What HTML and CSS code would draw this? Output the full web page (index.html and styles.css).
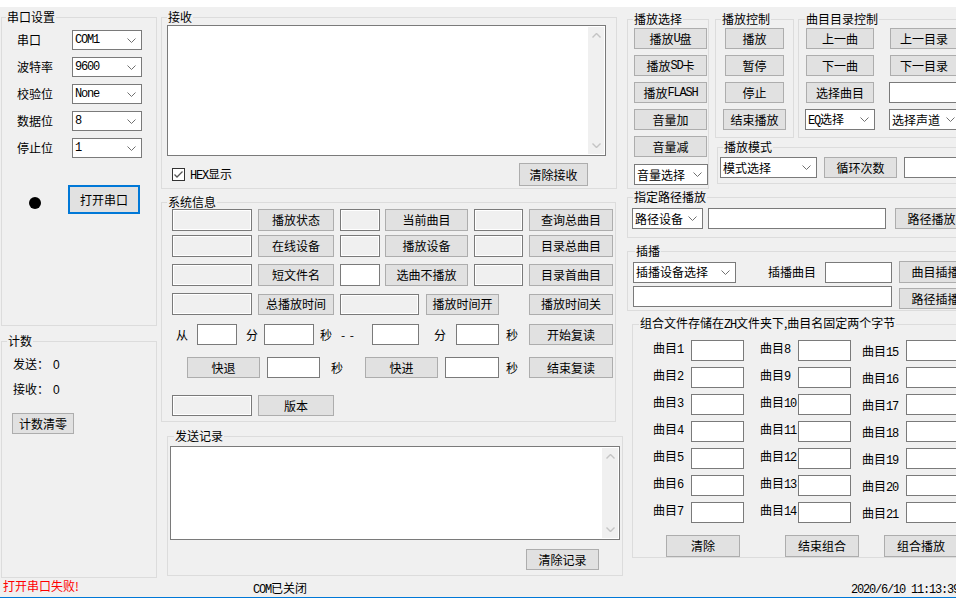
FILE: index.html
```html
<!DOCTYPE html>
<html lang="zh-CN">
<head>
<meta charset="utf-8">
<title>串口调试</title>
<link rel="stylesheet" href="styles.css">
</head>
<body>
<div class="topstrip"></div>
<div class="main">
  <div class="col-left">
    <fieldset class="grp g-serial">
      <legend>串口设置</legend>
      <div class="serial-rows">
        <div class="srow"><span class="slabel">串口</span><div class="combo w70 h20"><span class="mono">COM1</span><svg class="chev" width="9" height="5" viewBox="0 0 9 5"><polyline points="0.5,0.5 4.5,4.5 8.5,0.5"/></svg></div></div>
        <div class="srow"><span class="slabel">波特率</span><div class="combo w70 h20"><span class="mono">9600</span><svg class="chev" width="9" height="5" viewBox="0 0 9 5"><polyline points="0.5,0.5 4.5,4.5 8.5,0.5"/></svg></div></div>
        <div class="srow"><span class="slabel">校验位</span><div class="combo w70 h20"><span class="mono">None</span><svg class="chev" width="9" height="5" viewBox="0 0 9 5"><polyline points="0.5,0.5 4.5,4.5 8.5,0.5"/></svg></div></div>
        <div class="srow"><span class="slabel">数据位</span><div class="combo w70 h20"><span class="mono">8</span><svg class="chev" width="9" height="5" viewBox="0 0 9 5"><polyline points="0.5,0.5 4.5,4.5 8.5,0.5"/></svg></div></div>
        <div class="srow"><span class="slabel">停止位</span><div class="combo w70 h20"><span class="mono">1</span><svg class="chev" width="9" height="5" viewBox="0 0 9 5"><polyline points="0.5,0.5 4.5,4.5 8.5,0.5"/></svg></div></div>
      </div>
      <div class="openrow"><span class="dot"></span><div class="btn btn-open">打开串口</div></div>
    </fieldset>
    <fieldset class="grp g-count">
      <legend>计数</legend>
      <div class="cline">发送：<span class="cval">0</span></div>
      <div class="cline">接收：<span class="cval">0</span></div>
      <div class="btn btn-clr">计数清零</div>
    </fieldset>
  </div>

  <div class="col-mid">
    <fieldset class="grp g-recv">
      <legend>接收</legend>
      <div class="memo memo-recv"><div class="vscroll"><svg width="9" height="5" viewBox="0 0 9 5"><polyline points="0.5,4.5 4.5,0.5 8.5,4.5"/></svg><svg width="9" height="5" viewBox="0 0 9 5"><polyline points="0.5,0.5 4.5,4.5 8.5,0.5"/></svg></div></div>
      <div class="hexrow">
        <svg class="chk" width="13" height="13" viewBox="0 0 13 13"><rect x="0.5" y="0.5" width="12" height="12" fill="#fff" stroke="#333"/><polyline points="2.5,6.5 5,9 10.5,3.5" fill="none" stroke="#555" stroke-width="1.3"/></svg>
        <span class="hexlabel"><span class="mono">HEX</span>显示</span>
        <div class="btn w69 h23 btn-clrrecv">清除接收</div>
      </div>
    </fieldset>

    <fieldset class="grp g-sys">
      <legend>系统信息</legend>
      <div class="frow r1">
        <div class="tb ro w80 h22 ml10"></div>
        <div class="btn w76 h22 ml6">播放状态</div>
        <div class="tb ro w40 h22 ml6"></div>
        <div class="btn w83 h22 ml5">当前曲目</div>
        <div class="tb ro w49 h22 ml6"></div>
        <div class="btn w84 h22 ml6">查询总曲目</div>
      </div>
      <div class="frow r2">
        <div class="tb ro w80 h22 ml10"></div>
        <div class="btn w76 h22 ml6">在线设备</div>
        <div class="tb ro w40 h22 ml6"></div>
        <div class="btn w83 h22 ml5">播放设备</div>
        <div class="tb ro w49 h22 ml6"></div>
        <div class="btn w84 h22 ml6">目录总曲目</div>
      </div>
      <div class="frow r3">
        <div class="tb ro w80 h22 ml10"></div>
        <div class="btn w76 h22 ml6">短文件名</div>
        <div class="tb w40 h22 ml6"></div>
        <div class="btn w83 h22 ml5">选曲不播放</div>
        <div class="tb ro w49 h22 ml6"></div>
        <div class="btn w84 h22 ml6">目录首曲目</div>
      </div>
      <div class="frow r4">
        <div class="tb ro w80 h22 ml10"></div>
        <div class="btn w76 h21 ml6">总播放时间</div>
        <div class="tb ro w79 h21 ml6"></div>
        <div class="btn w73 h21 ml7">播放时间开</div>
        <div class="btn w84 h21 ml30">播放时间关</div>
      </div>
      <div class="frow r5">
        <span class="lbl ml14">从</span>
        <div class="tb w40 h21 ml9"></div>
        <span class="lbl ml9">分</span>
        <div class="tb w50 h21 ml6"></div>
        <span class="lbl ml6">秒</span>
        <span class="dash ml9">- -</span>
        <div class="tb w47 h21 ml13"></div>
        <span class="lbl ml15">分</span>
        <div class="tb w43 h21 ml10"></div>
        <span class="lbl ml7">秒</span>
        <div class="btn w84 h21 ml11">开始复读</div>
      </div>
      <div class="frow r6">
        <div class="btn w73 h21 ml25">快退</div>
        <div class="tb w53 h21 ml7"></div>
        <span class="lbl ml11">秒</span>
        <div class="btn w73 h21 ml22">快进</div>
        <div class="tb w54 h21 ml7"></div>
        <span class="lbl ml7">秒</span>
        <div class="btn w84 h21 ml11">结束复读</div>
      </div>
      <div class="frow r7">
        <div class="tb ro w80 h21 ml10"></div>
        <div class="btn w76 h21 ml6">版本</div>
      </div>
    </fieldset>

    <fieldset class="grp g-send">
      <legend>发送记录</legend>
      <div class="memo memo-send"><div class="vscroll"><svg width="9" height="5" viewBox="0 0 9 5"><polyline points="0.5,4.5 4.5,0.5 8.5,4.5"/></svg><svg width="9" height="5" viewBox="0 0 9 5"><polyline points="0.5,0.5 4.5,4.5 8.5,0.5"/></svg></div></div>
      <div class="btn w73 h21 btn-clrsend">清除记录</div>
    </fieldset>
  </div>

  <div class="col-right">
    <div class="rtop">
      <fieldset class="grp g-psel">
        <legend>播放选择</legend>
        <div class="vstack">
          <div class="btn w73 h21 ml6">播放<span class="mono">U</span>盘</div>
          <div class="btn w73 h21 ml6">播放<span class="mono">SD</span>卡</div>
          <div class="btn w73 h21 ml6">播放<span class="mono">FLASH</span></div>
          <div class="btn w73 h21 ml6">音量加</div>
          <div class="btn w73 h21 ml6">音量减</div>
          <div class="combo w74 h21 ml6 vol"><span>音量选择</span><svg class="chev" width="9" height="5" viewBox="0 0 9 5"><polyline points="0.5,0.5 4.5,4.5 8.5,0.5"/></svg></div>
        </div>
      </fieldset>
      <div class="rtop-sub">
        <div class="rtop-row">
          <fieldset class="grp g-pctl">
            <legend>播放控制</legend>
            <div class="vstack">
              <div class="btn w59 h21 ml9">播放</div>
              <div class="btn w59 h21 ml9">暂停</div>
              <div class="btn w59 h21 ml9">停止</div>
              <div class="btn w63 h21 ml7">结束播放</div>
            </div>
          </fieldset>
          <fieldset class="grp g-dir">
            <legend>曲目目录控制</legend>
            <div class="vstack">
              <div class="hrow"><div class="btn w68 h21 ml7">上一曲</div><div class="btn w68 h21 ml16">上一目录</div></div>
              <div class="hrow"><div class="btn w68 h21 ml7">下一曲</div><div class="btn w68 h21 ml16">下一目录</div></div>
              <div class="hrow"><div class="btn w68 h21 ml7">选择曲目</div><div class="tb w68 h21 ml15"></div></div>
              <div class="hrow"><div class="combo w70 h21 ml6"><span><span class="mono">EQ</span>选择</span><svg class="chev" width="9" height="5" viewBox="0 0 9 5"><polyline points="0.5,0.5 4.5,4.5 8.5,0.5"/></svg></div><div class="combo w72 h21 ml14"><span>选择声道</span><svg class="chev" width="9" height="5" viewBox="0 0 9 5"><polyline points="0.5,0.5 4.5,4.5 8.5,0.5"/></svg></div></div>
            </div>
          </fieldset>
        </div>
        <fieldset class="grp g-mode">
          <legend>播放模式</legend>
          <div class="hrow mt3">
            <div class="combo w97 h21 ml2"><span>模式选择</span><svg class="chev" width="9" height="5" viewBox="0 0 9 5"><polyline points="0.5,0.5 4.5,4.5 8.5,0.5"/></svg></div>
            <div class="btn w73 h21 ml7">循环次数</div>
            <div class="tb w60 h21 ml7"></div>
          </div>
        </fieldset>
      </div>
    </div>

    <fieldset class="grp g-path">
      <legend>指定路径播放</legend>
      <div class="hrow mt4">
        <div class="combo w71 h21 ml4"><span>路径设备</span><svg class="chev" width="9" height="5" viewBox="0 0 9 5"><polyline points="0.5,0.5 4.5,4.5 8.5,0.5"/></svg></div>
        <div class="tb w178 h21 ml5"></div>
        <div class="btn w73 h21 ml9">路径播放</div>
      </div>
    </fieldset>

    <fieldset class="grp g-ins">
      <legend>插播</legend>
      <div class="hrow mt3 center">
        <div class="combo w103 h21 ml5"><span>插播设备选择</span><svg class="chev" width="9" height="5" viewBox="0 0 9 5"><polyline points="0.5,0.5 4.5,4.5 8.5,0.5"/></svg></div>
        <span class="ml32 nolabel">插播曲目</span>
        <div class="tb w67 h21 ml9"></div>
        <div class="btn w73 h22 ml7">曲目插播</div>
      </div>
      <div class="hrow mt3">
        <div class="tb w259 h21 ml5"></div>
        <div class="btn w73 h21 ml7 mt2">路径插播</div>
      </div>
    </fieldset>

    <fieldset class="grp g-combo">
      <legend>组合文件存储在<span class="mono">ZH</span>文件夹下,曲目名固定两个字节</legend>
      <div class="tgrid">
        <span class="tl">曲目<span class="mono">1</span></span><div class="tb h21"></div><span></span><span class="tl">曲目<span class="mono">8</span></span><div class="tb h21"></div><span></span><span class="tl c3">曲目<span class="mono">15</span></span><div class="tb h21"></div>
        <span class="tl">曲目<span class="mono">2</span></span><div class="tb h21"></div><span></span><span class="tl">曲目<span class="mono">9</span></span><div class="tb h21"></div><span></span><span class="tl c3">曲目<span class="mono">16</span></span><div class="tb h21"></div>
        <span class="tl">曲目<span class="mono">3</span></span><div class="tb h21"></div><span></span><span class="tl">曲目<span class="mono">10</span></span><div class="tb h21"></div><span></span><span class="tl c3">曲目<span class="mono">17</span></span><div class="tb h21"></div>
        <span class="tl">曲目<span class="mono">4</span></span><div class="tb h21"></div><span></span><span class="tl">曲目<span class="mono">11</span></span><div class="tb h21"></div><span></span><span class="tl c3">曲目<span class="mono">18</span></span><div class="tb h21"></div>
        <span class="tl">曲目<span class="mono">5</span></span><div class="tb h21"></div><span></span><span class="tl">曲目<span class="mono">12</span></span><div class="tb h21"></div><span></span><span class="tl c3">曲目<span class="mono">19</span></span><div class="tb h21"></div>
        <span class="tl">曲目<span class="mono">6</span></span><div class="tb h21"></div><span></span><span class="tl">曲目<span class="mono">13</span></span><div class="tb h21"></div><span></span><span class="tl c3">曲目<span class="mono">20</span></span><div class="tb h21"></div>
        <span class="tl">曲目<span class="mono">7</span></span><div class="tb h21"></div><span></span><span class="tl">曲目<span class="mono">14</span></span><div class="tb h21"></div><span></span><span class="tl c3">曲目<span class="mono">21</span></span><div class="tb h21"></div>
      </div>
      <div class="hrow mt12">
        <div class="btn w74 h22 ml33">清除</div>
        <div class="btn w74 h22 ml45">结束组合</div>
        <div class="btn w74 h22 ml25">组合播放</div>
      </div>
    </fieldset>
  </div>
</div>
<div class="status">
  <span class="st-err">打开串口失败!</span>
  <span class="st-com"><span class="mono">COM</span>已关闭</span>
  <span class="st-date mono">2020/6/10 11:13:39</span>
</div>
</body>
</html>
```

FILE: styles.css
```css
* { box-sizing: border-box; }
body {
  margin: 0;
  width: 956px;
  height: 598px;
  overflow: hidden;
  background: #f0f0f0;
  font-family: "Noto Sans CJK SC", "Noto Sans", sans-serif;
  font-size: 12px;
  line-height: 14px;
  color: #000;
}
.mono {
  font-family: "Liberation Mono", "DejaVu Sans Mono", monospace;
  font-size: 12px;
  letter-spacing: -1.2px;
}
.topstrip { height: 7px; background: #fff; }
.main { display: flex; height: 571px; }
.col-left { width: 157px; flex-shrink: 0; }
.col-mid { width: 466px; flex-shrink: 0; }
.col-right { width: 345px; flex-shrink: 0; }

/* group boxes */
.grp {
  margin: 0;
  padding: 0;
  border: 1px solid #dcdcdc;
  min-width: 0;
  flex-shrink: 0;
}
.grp > legend {
  padding: 0 1px;
  margin-left: 5px;
  font-size: 12px;
  line-height: 14px;
}

/* controls */
.btn {
  background: #e1e1e1;
  border: 1px solid #adadad;
  display: flex;
  align-items: center;
  justify-content: center;
  flex-shrink: 0;
  white-space: nowrap;
}
.tb {
  border: 1px solid #7a7a7a;
  background: #fff;
  flex-shrink: 0;
}
.tb.ro { background: #f0f0f0; box-shadow: inset 1px 1px 0 #fff, inset -1px -1px 0 #fff; }
.combo {
  border: 1px solid #7a7a7a;
  background: #fff;
  display: flex;
  align-items: center;
  justify-content: space-between;
  padding: 0 5px 0 2px;
  flex-shrink: 0;
  white-space: nowrap;
}
.chev { fill: none; stroke: #707070; stroke-width: 1; flex-shrink: 0; }
.nolabel { white-space: nowrap; flex-shrink: 0; }

/* sizes */
.w40 { width: 40px; } .w43 { width: 43px; } .w47 { width: 47px; } .w49 { width: 49px; }
.w50 { width: 50px; } .w53 { width: 53px; } .w54 { width: 54px; } .w59 { width: 59px; }
.w60 { width: 60px; } .w63 { width: 63px; } .w67 { width: 67px; } .w68 { width: 68px; }
.w69 { width: 69px; } .w70 { width: 70px; } .w71 { width: 71px; } .w72 { width: 72px; }
.w73 { width: 73px; } .w74 { width: 74px; } .w76 { width: 76px; } .w79 { width: 79px; }
.w80 { width: 80px; } .w83 { width: 83px; } .w84 { width: 84px; } .w97 { width: 97px; }
.w103 { width: 103px; } .w178 { width: 178px; } .w259 { width: 259px; }
.h20 { height: 20px; } .h21 { height: 21px; } .h22 { height: 22px; } .h23 { height: 23px; }
.ml2 { margin-left: 2px; } .ml4 { margin-left: 4px; } .ml5 { margin-left: 5px; }
.ml6 { margin-left: 6px; } .ml7 { margin-left: 7px; } .ml9 { margin-left: 9px; }
.ml10 { margin-left: 10px; } .ml11 { margin-left: 11px; } .ml13 { margin-left: 13px; }
.ml14 { margin-left: 14px; } .ml15 { margin-left: 15px; } .ml16 { margin-left: 16px; }
.ml22 { margin-left: 22px; } .ml25 { margin-left: 25px; } .ml30 { margin-left: 30px; }
.ml32 { margin-left: 32px; } .ml33 { margin-left: 33px; } .ml45 { margin-left: 45px; }
.mt2 { margin-top: 2px; } .mt3 { margin-top: 3px; } .mt4 { margin-top: 4px; } .mt12 { margin-top: 12px; }

.hrow { display: flex; align-items: flex-start; }
.hrow.center { align-items: center; }
.vstack { display: flex; flex-direction: column; align-items: flex-start; gap: 6px; margin-top: 2px; }

/* left column */
.g-serial { margin: 3px 0 0 1px; width: 156px; height: 316px; }
.g-serial > legend { margin-left: 4px; }
.serial-rows { display: flex; flex-direction: column; gap: 7px; margin-top: 6px; }
.srow { display: flex; align-items: center; }
.slabel { width: 70px; padding-left: 15px; flex-shrink: 0; }
.openrow { display: flex; align-items: center; margin-top: 27px; }
.dot { width: 12px; height: 12px; border-radius: 50%; background: #000; margin-left: 27px; margin-top: 6px; }
.btn-open { width: 72px; height: 29px; margin-left: 27px; border: 2px solid #0078d7; }
.g-count { margin: 8px 0 0 1px; width: 156px; height: 244px; }
.g-count > legend { margin-left: 5px; }
.cline { line-height: 23px; padding-left: 11px; }
.cline:first-of-type { margin-top: 4px; }
.cval { margin-left: 4px; font-family: "Liberation Sans", sans-serif; }
.btn-clr { width: 62px; height: 21px; margin: 11px 0 0 10px; }

/* middle column */
.g-recv { margin: 3px 0 0 4px; width: 456px; height: 179px; }
.memo {
  border: 1px solid #7a7a7a;
  background: #fff;
  display: flex;
  justify-content: flex-end;
}
.memo-recv { width: 439px; height: 131px; margin: 1px 0 0 5px; }
.vscroll {
  width: 16px;
  margin: 1px;
  background: #f0f0f0;
  display: flex;
  flex-direction: column;
  justify-content: space-between;
  align-items: center;
  padding: 6px 0;
}
.vscroll svg { fill: none; stroke: #c4c4c4; stroke-width: 1.4; }
.hexrow { display: flex; align-items: center; margin-top: 7px; height: 23px; }
.chk { margin-left: 10px; flex-shrink: 0; }
.hexlabel { margin-left: 5px; }
.btn-clrrecv { margin-left: auto; margin-right: 28px; }

.g-sys { margin: 6px 0 0 4px; width: 455px; height: 227px; }
.frow { display: flex; align-items: center; }
.r2 { margin-top: 4px; }
.r3, .r4 { margin-top: 7px; }
.r5 { margin-top: 9px; }
.r6 { margin-top: 12px; }
.r7 { margin-top: 17px; }
.lbl { width: 12px; flex-shrink: 0; }
.dash { width: 18px; flex-shrink: 0; letter-spacing: 1px; }

.g-send { margin: 7px 0 0 10px; width: 456px; height: 147px; }
.g-send > legend { margin-left: 6px; }
.memo-send { width: 450px; height: 94px; margin: 3px 0 0 2px; }
.btn-clrsend { margin: 9px 0 0 358px; }

/* right column */
.rtop { display: flex; align-items: flex-start; }
.g-psel { margin: 5px 0 0 4px; width: 82px; height: 177px; }
.vol { margin-top: 1px; }
.rtop-sub { display: flex; flex-direction: column; }
.rtop-row { display: flex; }
.g-pctl { margin: 5px 0 0 6px; width: 79px; height: 126px; }
.g-dir { margin: 5px 0 0 4px; width: 170px; height: 126px; }
.g-dir > legend { margin-left: 6px; }
.g-dir .vstack { align-items: stretch; }
.g-mode { margin: 2px 0 0 8px; width: 252px; height: 44px; }
.g-path { margin: 1px 0 0 4px; width: 341px; height: 48px; }
.g-ins { margin: 6px 0 0 4px; width: 341px; height: 67px; }
.g-ins > legend { margin-left: 7px; }
.g-combo { margin: 5px 0 0 9px; width: 336px; height: 242px; }
.g-combo > legend { margin-left: 6px; }
.tgrid {
  display: grid;
  grid-template-columns: 38px 53px 16px 38px 53px 11px 44px 60px;
  grid-auto-rows: 21px;
  row-gap: 6px;
  margin: 8px 0 0 20px;
}
.tl { line-height: 15px; white-space: nowrap; }
.tl.c3 { line-height: 21px; }

/* status bar */
.status {
  height: 20px;
  border-bottom: 1px solid #0078d7;
  display: flex;
  white-space: nowrap;
}
.st-err { width: 253px; padding-left: 3px; color: #ff0000; line-height: 16px; flex-shrink: 0; }
.st-com { align-self: flex-end; line-height: 14px; }
.st-date { margin-left: auto; margin-right: -3px; align-self: flex-end; line-height: 14px; }
```
